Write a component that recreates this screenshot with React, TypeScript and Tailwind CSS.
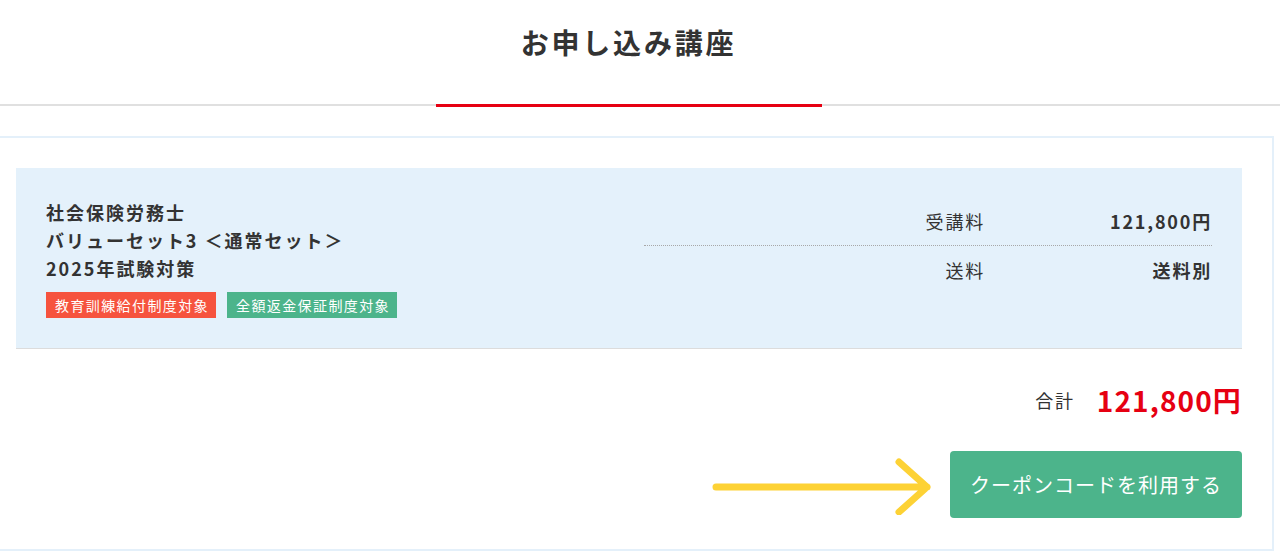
export default function App() {
  return (
    <main
      className="w-[1280px] min-h-[555px] bg-white text-[#333] overflow-hidden"
      style={{ fontFamily: '"Noto Sans CJK JP", "Noto Sans", sans-serif' }}
    >
      {/* heading */}
      <div className="w-[1257px] h-[104px] pt-[22px] flex justify-center">
        <h1 className="text-[28px] leading-[40px] font-bold tracking-[0.1em]">お申し込み講座</h1>
      </div>
      <div className="w-full h-[2px] bg-[#e0e0e0]">
        <div className="w-[1257px]">
          <div className="mx-auto w-[386px] h-[3px] bg-[#e60012]" />
        </div>
      </div>

      {/* course card */}
      <section className="mt-[30px] w-[1274px] border-y-2 border-r-2 border-[#e4f0fa] pl-4 pr-[30px] pt-[30px] pb-[31px]">
        <div className="bg-[#e4f1fb] border-b border-[#dcdcdc] p-[30px] flex justify-between">
          <div className="flex-1">
            <p className="text-[18px] leading-[28px] font-bold tracking-[0.11em]">
              社会保険労務士
              <br />
              バリューセット3 ＜通常セット＞
              <br />
              2025年試験対策
            </p>
            <div className="mt-[10px] flex gap-[11px]">
              <span className="bg-[#f6533e] text-white text-[14px] leading-[26px] tracking-[0.1em] pl-[9px] pr-[7px]">
                教育訓練給付制度対象
              </span>
              <span className="bg-[#4cb48b] text-white text-[14px] leading-[26px] tracking-[0.1em] pl-[9px] pr-[7px]">
                全額返金保証制度対象
              </span>
            </div>
          </div>
          <div className="w-[568px] text-[18px] tracking-[0.1em]">
            <div className="h-[48px] flex items-center border-b border-dotted border-[#a8a8a8]">
              <span className="w-[341px] text-right">受講料</span>
              <span className="flex-1 text-right font-bold">121,800円</span>
            </div>
            <div className="h-[48px] flex items-center">
              <span className="w-[341px] text-right">送料</span>
              <span className="flex-1 text-right font-bold">送料別</span>
            </div>
          </div>
        </div>

        <div className="mt-[31px] h-[40px] flex items-center justify-end gap-[22px]">
          <span className="text-[18px] tracking-[0.1em]">合計</span>
          <span className="text-[28px] font-bold text-[#e60012] tracking-[0.04em]">121,800円</span>
        </div>

        <div className="mt-[31px] flex items-center justify-end gap-[17px]">
          <svg width="224" height="60" viewBox="0 0 224 60" fill="none">
            <path
              d="M7 32 H218 M190 7 L218 32 L190 57"
              stroke="#fdd235"
              strokeWidth="7"
              strokeLinecap="round"
              strokeLinejoin="round"
            />
          </svg>
          <button className="w-[292px] h-[67px] rounded-[4px] bg-[#4cb48b] text-white text-[20px] tracking-[0.05em]">
            クーポンコードを利用する
          </button>
        </div>
      </section>
    </main>
  );
}
